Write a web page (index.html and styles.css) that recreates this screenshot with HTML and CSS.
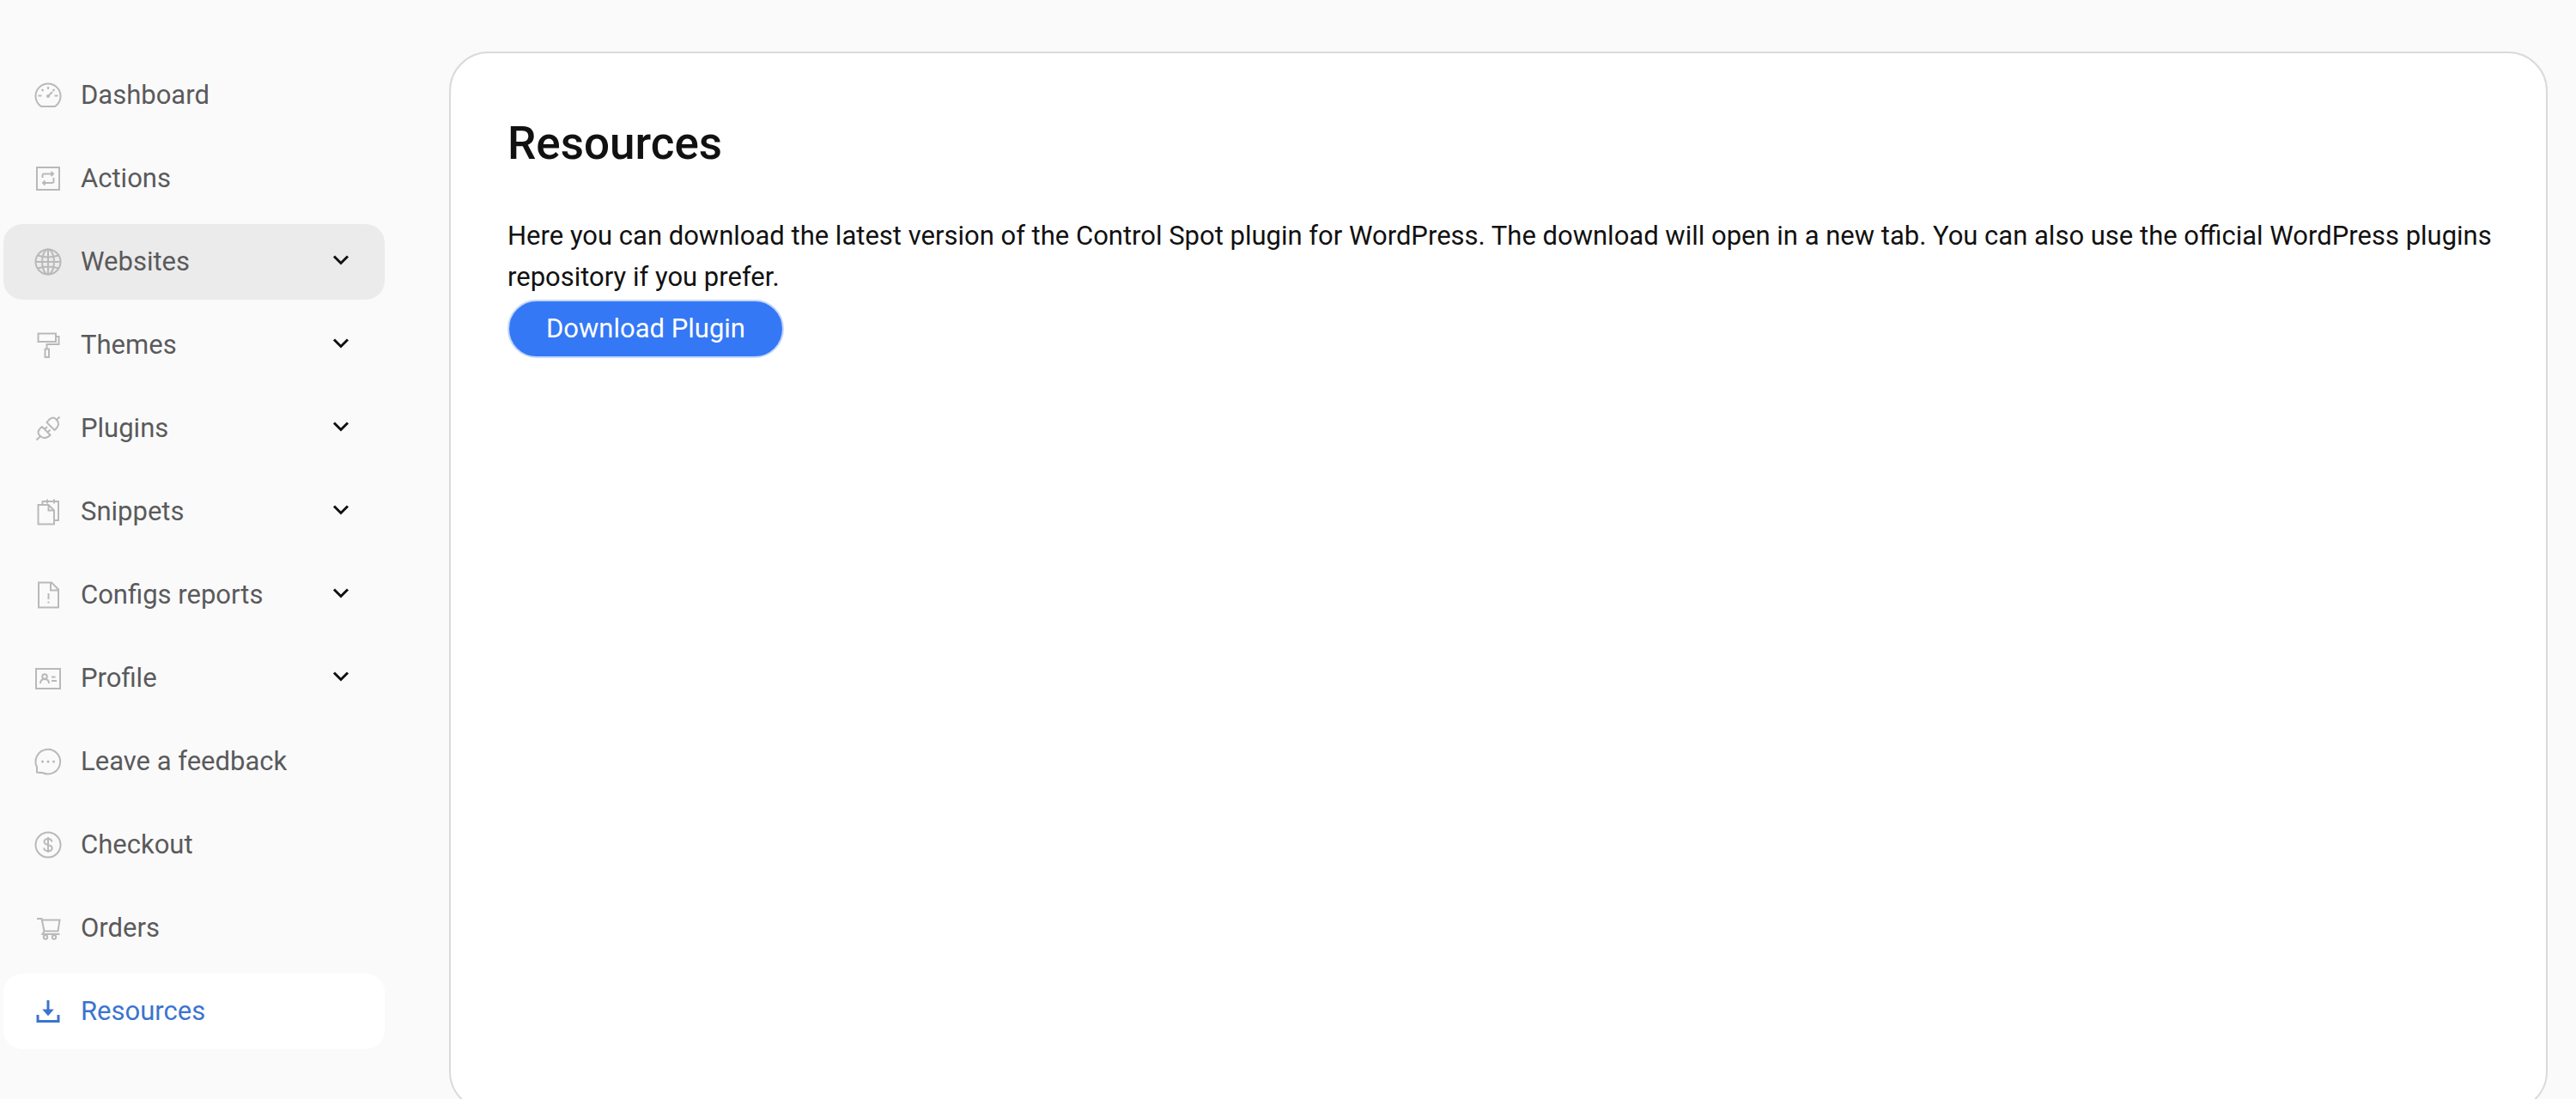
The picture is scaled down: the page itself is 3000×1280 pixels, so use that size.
FILE: index.html
```html
<!DOCTYPE html>
<html lang="en">
<head>
    <meta charset="UTF-8" />
    <meta name="viewport" content="width=device-width, initial-scale=1.0"/>
    <title>Resources</title>
    <link rel="stylesheet" href="styles.css">
</head>
<body>
    <nav class="sidebar">
        <a class="item" href="#dashboard">
            <svg class="icon" viewBox="0 0 32 32"><path d="M8 29h16A14.500 14.500 0 1 0 8 29z"/><path d="M16 6v3M8.500 9l2 2M23.500 9l-2 2M4.500 16.500h4M23.500 16.500h4M16 17l5-5"/><circle cx="16" cy="17" r="1"/></svg>
            <span>Dashboard</span>
        </a>
        <a class="item" href="#actions">
            <svg class="icon" viewBox="0 0 32 32"><path d="M3 3h26v26H3z"/><path d="M9.500 15v-2.500q0-2 2-2H22M19.500 8l2.500 2.500-2.500 2.500M22.500 15v4q0 2-2 2H10M12.500 18.500L10 21l2.500 2.500"/></svg>
            <span>Actions</span>
        </a>
        <button class="item hover" type="button">
            <svg class="icon" viewBox="0 0 32 32"><circle cx="16" cy="16" r="14.500"/><ellipse cx="16" cy="16" rx="7" ry="14.500"/><path d="M16 1.500v29M1.500 16h29M4 8.500q12 4 24 0M4 23.500q12-4 24 0"/></svg>
            <span>Websites</span>
            <svg class="chevron" viewBox="0 0 20 14"><path d="M2 2.500l8 8 8-8"/></svg>
        </button>
        <button class="item" type="button">
            <svg class="icon" viewBox="0 0 32 32"><path d="M4.500 2.500H25v9.500H4.500zM25 6h3.500v9H14.500v5M12.500 20.500h4.500v9.500h-4.500z"/></svg>
            <span>Themes</span>
            <svg class="chevron" viewBox="0 0 20 14"><path d="M2 2.500l8 8 8-8"/></svg>
        </button>
        <button class="item" type="button">
            <svg class="icon" viewBox="0 0 32 32"><path d="M2.500 29.500l4-4M29.500 2.500l-4 4M9 14l9.500 9.500Q13 30 7 25T9 14zM14.500 9l9 9Q31 12 26 6T14.500 9zM12 17l3-3M15.500 20.500l3-3"/></svg>
            <span>Plugins</span>
            <svg class="chevron" viewBox="0 0 20 14"><path d="M2 2.500l8 8 8-8"/></svg>
        </button>
        <button class="item" type="button">
            <svg class="icon" viewBox="0 0 32 32"><path d="M4.500 8h12l6.500 6.500v16H4.500zM16.500 8v6.500H23M9.500 8V4H28v22h-5M15 1.500v5M23 1.500v5"/></svg>
            <span>Snippets</span>
            <svg class="chevron" viewBox="0 0 20 14"><path d="M2 2.500l8 8 8-8"/></svg>
        </button>
        <button class="item" type="button">
            <svg class="icon" viewBox="0 0 32 32"><path d="M5 1.500h15l8 8v21H5zM19 1.500v9h9M16.500 14v7M16.500 23.500v2"/></svg>
            <span>Configs reports</span>
            <svg class="chevron" viewBox="0 0 20 14"><path d="M2 2.500l8 8 8-8"/></svg>
        </button>
        <button class="item" type="button">
            <svg class="icon" viewBox="0 0 32 32"><path d="M2 5h28v23H2z"/><circle cx="12" cy="14" r="2.800"/><path d="M7 22q0-5 5-5t5 5M20 14.500h4.500M20 19h6"/></svg>
            <span>Profile</span>
            <svg class="chevron" viewBox="0 0 20 14"><path d="M2 2.500l8 8 8-8"/></svg>
        </button>
        <a class="item" href="#feedback">
            <svg class="icon" viewBox="0 0 32 32"><path d="M3 28.500V22.500A14.300 14.300 0 1 1 9.500 29q-3 0-6.500-.500z"/><path class="dots" d="M9.500 16h.01M16 16h.01M22.500 16h.01"/></svg>
            <span>Leave a feedback</span>
        </a>
        <a class="item" href="#checkout">
            <svg class="icon" viewBox="0 0 32 32"><circle cx="16" cy="16" r="14.500"/><path d="M20.500 12.500q-.500-3.500-4.500-3.500t-4.500 3.200q0 2.800 4.500 3.800t4.700 3.800q0 3.400-4.700 3.400t-4.700-3.700M16 7v18"/></svg>
            <span>Checkout</span>
        </a>
        <a class="item" href="#orders">
            <svg class="icon" viewBox="0 0 32 32"><path d="M3 5h5.500l3 14.500h16l2-13H9M11.500 19.500l-2 3.500H29.500"/><circle cx="13" cy="26.500" r="2.200"/><circle cx="23" cy="26.500" r="2.200"/></svg>
            <span>Orders</span>
        </a>
        <a class="item active" href="#resources" aria-current="page">
            <svg class="icon" viewBox="0 0 32 32"><path d="M4 20v7.500h24V20M16 3v14"/><path class="fill" d="M12.500 15h7L16 19z"/></svg>
            <span>Resources</span>
        </a>
    </nav>

    <main class="card">
        <h1>Resources</h1>
        <p>Here you can download the latest version of the Control Spot plugin for WordPress. The download will open in a new tab. You can also use the official WordPress plugins repository if you prefer.</p>
        <a class="download" href="#download" target="_blank">Download Plugin</a>
    </main>
</body>
</html>
```
FILE: styles.css
```css
* {
    box-sizing: border-box;
}
body {
    margin: 0;
    height: 100vh;
    overflow: hidden;
    display: flex;
    align-items: flex-start;
    background-color: #fafafa;
    color: #111;
    font-family: Roboto, Arial, sans-serif;
    font-size: 31px;
    line-height: 48px;
}
.sidebar {
    flex: none;
    width: 523px;
    padding: 67px 75px 0 4px;
    display: flex;
    flex-direction: column;
    gap: 9px;
}
.item {
    display: flex;
    align-items: center;
    gap: 22px;
    height: 88px;
    padding: 0 40px 0 36px;
    border: 0;
    border-radius: 22px;
    background: none;
    color: #5a5a5c;
    font: inherit;
    text-align: left;
    text-decoration: none;
    cursor: pointer;
}
.item.hover {
    background-color: #ebebeb;
}
.item.active {
    background-color: #fff;
    color: #3b74cf;
}
.icon {
    width: 32px;
    height: 32px;
    fill: none;
    stroke: #b9b9b9;
    stroke-width: 2;
}
.icon .dots {
    stroke-width: 3;
    stroke-linecap: round;
}
.active .icon {
    stroke: #3b74cf;
    stroke-width: 3;
}
.active .fill {
    fill: #3b74cf;
}
.chevron {
    width: 20px;
    height: 14px;
    margin: 0 1px 4px auto;
    fill: none;
    stroke: #111;
    stroke-width: 3;
}
.card {
    flex: 1;
    min-height: calc(100vh - 46px);
    margin: 60px 33px 0 0;
    padding: 66px 60px 66px 66px;
    background-color: #fff;
    border: 2px solid #dadada;
    border-radius: 46px;
}
h1 {
    margin: 0 0 44px;
    font-size: 53px;
    font-weight: 500;
    line-height: 79px;
}
p {
    margin: 0 0 2px;
}
.download {
    display: inline-block;
    padding: 8px 43px;
    border: 2px solid #c4d8fb;
    border-radius: 34px;
    background-color: #3478f6;
    color: #fff;
    text-decoration: none;
}
```
